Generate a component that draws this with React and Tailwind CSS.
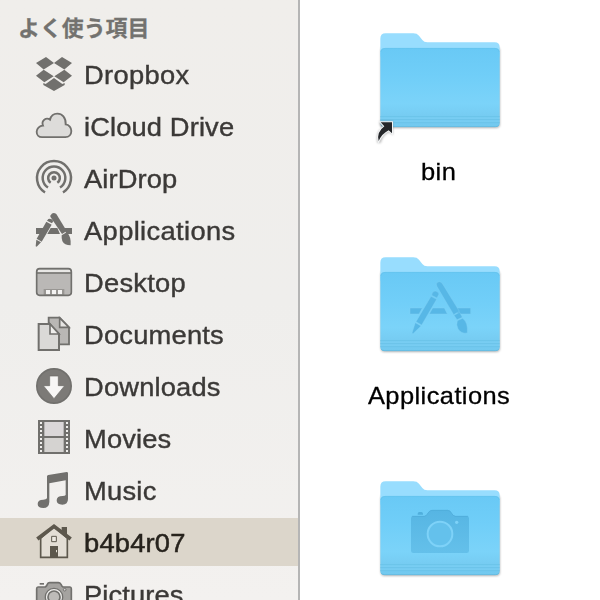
const G = "#71706d";

const icons = {
  dropbox: (
    <svg viewBox="24 6 120 144" className="h-12 w-10">
      <g fill={G}>
        <path d="M30 45 60 27 84 45 53 64.500z M138 45 108 27 84 45 115 64.500z M30 83 53 65 83 85 55 103z M138 83 115 65 85 85 113 103z" />
        <path d="M52 105 59 108 84 90 109 108 116 105 116 111 84 129 52 111z" />
      </g>
    </svg>
  ),
  cloud: (
    <svg viewBox="24 162 120 144" className="h-12 w-10">
      <path d="M48 267.500C38 267.500 32 260 32 251C32 242 40 233 51 233C45 218 60 207 72 215C75 203 85 197 94 197C108 197 120 208 119 229C129 230 136 239 136 249C136 260 129 267.500 118 267.500z" fill="#dddcda" stroke={G} strokeWidth="5.500" />
    </svg>
  ),
  airdrop: (
    <svg viewBox="24 6 120 144" className="h-12 w-10">
      <circle cx="84" cy="78" r="7.500" fill={G} />
      <g fill="none" stroke={G} strokeWidth="7.500">
        <path d="M74 92.500A17.500 17.500 0 1 1 94 92.500" />
        <path d="M66 106.500A34 34 0 1 1 102 106.500" />
        <path d="M57 121.500A51 51 0 1 1 111 121.500" />
      </g>
    </svg>
  ),
  apps: (
    <svg viewBox="24 162 120 144" className="h-12 w-10">
      <g fill={G}>
        <path d="M30 228H55L45 246H30z M74 228H94L102 246H64z M112 228H138V246H122z" />
        <path d="M74 190Q80 179 91 186L122 237 108 246 73 194z" />
        <path d="M107 250 122 241Q136 254 134 280Q115 280 109 267Q106 258 107 250z" />
        <path d="M63 206 67 201Q76 198 82 207L78 214z" />
        <path d="M61 209 77 218 47 269 32 260z M31 263 45 271 32 284 29 283z" />
      </g>
    </svg>
  ),
  desktop: (
    <svg viewBox="24 6 120 144" className="h-12 w-10">
      <rect x="32" y="38" width="104" height="80" rx="7" fill="#bab8b6" />
      <path d="M34 41H134V49H34z" fill="#e8e7e5" />
      <path d="M32 51H136" stroke={G} strokeWidth="4.500" />
      <path d="M53 117V99H115V117z" fill="#989693" />
      <path d="M60 102H72V115H60z M78 102H90V115H78z M96 102H108V115H96z" fill="#f4f3f2" />
      <rect x="32" y="38" width="104" height="80" rx="9" fill="none" stroke={G} strokeWidth="5" />
    </svg>
  ),
  documents: (
    <svg viewBox="24 162 120 144" className="h-12 w-10">
      <path d="M68 185H101L129 214V265H68z" fill="#b9b7b5" stroke={G} strokeWidth="5.500" />
      <path d="M101 186V214H129z" fill="#e6e5e3" stroke={G} strokeWidth="5" />
      <path d="M38 204H71L99 234V282H38z" fill="#dad9d7" stroke={G} strokeWidth="6" />
      <path d="M72 204V234H99z" fill="#efeeec" stroke={G} strokeWidth="5" />
    </svg>
  ),
  downloads: (
    <svg viewBox="24 6 120 144" className="h-12 w-10">
      <circle cx="84" cy="78" r="51.500" fill="#7c7a77" stroke={G} strokeWidth="5" />
      <path d="M71 48H97V77H116L84 116 52 77H71z" fill="#f7f6f5" stroke="#696865" strokeWidth="2" />
    </svg>
  ),
  movies: (
    <svg viewBox="24 162 120 144" className="h-12 w-10">
      <path d="M36 180H132V282H36z" fill={G} />
      <path d="M55 186H113V228H55z" fill="#dad7d8" />
      <path d="M55 234H113V276H55z" fill="#d5d3d1" />
      <path d="M45 186V280 M123 186V280" stroke="#f0efed" strokeWidth="6" strokeDasharray="6 6" />
    </svg>
  ),
  music: (
    <svg viewBox="24 6 120 144" className="h-12 w-10">
      <path d="M63 37Q63 34 67 33L122 24Q126 24 126 28V105Q126 122 109 122Q92 122 92 109Q92 96 110 96Q117 96 119 93V49L70 58V114Q69 132 52 132Q35 132 35 120Q35 107 52 107Q60 107 63 103z" fill={G} />
    </svg>
  ),
  home: (
    <svg viewBox="24 162 120 144" className="h-12 w-10">
      <path d="M44 222 84 188 124 222V280H44z" fill="#e3ded5" stroke="#5d584d" strokeWidth="5" />
      <path d="M107 207V189H123V219z" fill="#5d584d" />
      <path d="M34 225 84 187 134 225" fill="none" stroke="#5d584d" strokeWidth="11.500" />
      <path d="M77 217H91V233H77z" fill="#eeeae2" stroke="#5d584d" strokeWidth="3" />
      <path d="M72 246H96V280H72z" fill="#5d584d" />
      <path d="M90 258H93V265H90z" fill="#e6e1d8" />
    </svg>
  ),
  pictures: (
    <svg viewBox="24 318 120 144" className="h-12 w-10">
      <path d="M41 357H54V362H41z" fill={G} />
      <path d="M36 369H58Q62 366 64 361Q66 356 71 356H97Q102 356 105 361Q107 367 111 369H132Q136 369 136 374V430H32V374Q32 369 36 369z" fill="#a5a3a0" stroke={G} strokeWidth="5" />
      <circle cx="84" cy="399" r="26" fill="#f0efed" stroke={G} strokeWidth="4" />
      <circle cx="84" cy="399" r="18" fill="#bdbbb8" stroke={G} strokeWidth="5" />
      <circle cx="116" cy="377" r="4" fill="#d5d3d1" stroke={G} strokeWidth="3" />
    </svg>
  ),
};

const rows = [
  ["dropbox", "Dropbox", "tracking-[0.3px]"],
  ["cloud", "iCloud Drive", "tracking-[0.12px]"],
  ["airdrop", "AirDrop", "tracking-[0.1px]"],
  ["apps", "Applications", "tracking-[0.35px]"],
  ["desktop", "Desktop", "tracking-[0.25px]"],
  ["documents", "Documents", "tracking-[0.2px]"],
  ["downloads", "Downloads", "tracking-[0.17px]"],
  ["movies", "Movies", "tracking-[0.15px]"],
  ["music", "Music", "tracking-[0.25px]"],
  ["home", "b4b4r07", "tracking-[0.2px]"],
  ["pictures", "Pictures", "tracking-[0.1px]"],
];

function AppsMark() {
  return (
    <g fill="#57b7e6" stroke="#84d2f5" strokeWidth="1.200">
      <path d="M150 192H187L177 210H150z M218 192H253L262 210H208z M283 192H332V210H293z" />
      <path d="M229 121Q229 113 238 113Q244 113 248 120L298 202 281 212 230 126z" />
      <path d="M282 214 299 205 307 220 291 227z M292 230 308 223Q325 236 322 267Q303 270 294 254Q288 242 292 230z" />
      <path d="M215 154Q216 142 225 141Q235 142 237 150L231 162z M213 157 230 166 185 243 168 233z M166 236 183 246 159 269 156 267z" />
    </g>
  );
}

function CameraMark() {
  return (
    <g>
      <path d="M173 137Q173 132 178 132H184Q189 132 189 137V140H173z" fill="#50afdd" />
      <path d="M160 144H193Q200 143 204 134Q209 126 216 126H263Q271 126 275 135Q279 143 286 144H320Q327 144 327 151V248Q327 255 320 255H160Q153 255 153 248V151Q153 144 160 144z" fill="url(#camera)" />
      <path d="M156 145H193Q200 144 204 135Q209 127 216 127H263Q271 127 275 136Q279 144 286 145H324" fill="none" stroke="#4da9d8" strokeWidth="2" />
      <circle cx="240" cy="198" r="37" fill="#64c1ec" stroke="#7ed2f8" strokeWidth="6" />
      <circle cx="290" cy="163" r="5" fill="#7ed2f8" />
    </g>
  );
}

function Folder({ kind }) {
  return (
    <svg viewBox="0 0 480 384" className="h-32 w-40 shrink-0">
      <defs>
        <linearGradient id="front" x1="0" y1="0" x2="0" y2="1">
          <stop offset="0" stopColor="#69c9f5" />
          <stop offset="0.350" stopColor="#70cef8" />
          <stop offset="0.700" stopColor="#7bd3f9" />
          <stop offset="0.860" stopColor="#76ccf2" />
          <stop offset="1" stopColor="#72c9ef" />
        </linearGradient>
        <linearGradient id="camera" x1="0" y1="0" x2="0" y2="1">
          <stop offset="0" stopColor="#56b5e3" />
          <stop offset="1" stopColor="#64c0ea" />
        </linearGradient>
        <filter id="soft" x="-10%" y="-10%" width="120%" height="120%">
          <feGaussianBlur stdDeviation="3" />
        </filter>
      </defs>
      <rect x="62" y="80" width="358" height="244" rx="12" fill="#777" opacity="0.550" filter="url(#soft)" />
      <path d="M61 100V56Q61 40 77 40H160Q171 40 177 47L187 60Q192 67 202 67H404Q419 67 419 82V110H61z" fill="#98ddfe" />
      <path d="M61 98Q61 84 75 84H405Q419 84 419 98V309Q419 321 407 321H73Q61 321 61 309z" fill="url(#front)" />
      <path d="M62 96Q64 85 75 85H405Q416 85 418 96" fill="none" stroke="#62bee9" strokeWidth="1.500" />
      <path d="M61 290H419M61 299H419M61 308H419" stroke="#69c0e6" strokeWidth="2.500" />
      <path d="M61 294H419M61 303H419" stroke="#80d1f5" strokeWidth="1.500" />
      <path d="M64 316Q67 320 74 320H406Q413 320 416 316" fill="none" stroke="#64b7dc" strokeWidth="2.500" />
      {kind === "apps" && <AppsMark />}
      {kind === "camera" && <CameraMark />}
      {kind === "alias" && (
        <g>
          <path d="M52 368Q46 338 66 324L59 314V304H99V346L88 337Q69 344 62 369z" fill="#777" opacity="0.500" filter="url(#soft)" />
          <path d="M62 307H96V340L86 331Q66 341 56 363Q49 337 73 319z" fill="#25272a" stroke="#f2f4f5" strokeWidth="6" paintOrder="stroke" />
        </g>
      )}
    </svg>
  );
}

export default function App() {
  return (
    <div className="flex h-[600px] w-[600px] overflow-hidden bg-white font-['Liberation_Sans','Noto_Sans_CJK_JP',sans-serif]">
      <aside className="h-full w-[300px] shrink-0 overflow-hidden border-r-2 border-[#b5b5b5] bg-linear-to-b from-[#f0eeeb] via-[#efeeec] to-[#f3f1ef]">
        <h2 className="h-[50px] pt-[11px] pl-[18px] font-['Noto_Sans_CJK_JP',sans-serif] text-[21.900px] leading-[32px] font-bold text-[#73726f] [-webkit-text-stroke:0.3px_#73726f]">よく使う項目</h2>
        <ul className="flex flex-col gap-1">
          {rows.map(([icon, label, tracking]) => (
            <li key={icon} className={`flex h-12 shrink-0 items-center gap-[10px] pl-[34px] ${icon === "home" ? "bg-[#dcd6cb]" : ""}`}>
              {icons[icon]}
              <span className={`origin-left scale-x-105 pt-px text-[26px] leading-[30px] whitespace-nowrap ${tracking} ${icon === "home" ? "text-[#27231d] [-webkit-text-stroke:0.5px_#27231d]" : "text-[#3b3937] [-webkit-text-stroke:0.4px_#3b3937]"}`}>{label}</span>
            </li>
          ))}
        </ul>
      </aside>
      <main className="flex w-[280px] flex-col pt-5">
        {[["alias", "bin"], ["apps", "Applications"], ["camera", null]].map(([kind, label]) => (
          <section key={kind} className="flex h-56 shrink-0 flex-col items-center">
            <Folder kind={kind} />
            {label && (
              <span className="mr-[2px] scale-x-106 pt-[9px] text-[24px] leading-[30px] tracking-[0.4px] text-black [-webkit-text-stroke:0.3px_black]">{label}</span>
            )}
          </section>
        ))}
      </main>
    </div>
  );
}
